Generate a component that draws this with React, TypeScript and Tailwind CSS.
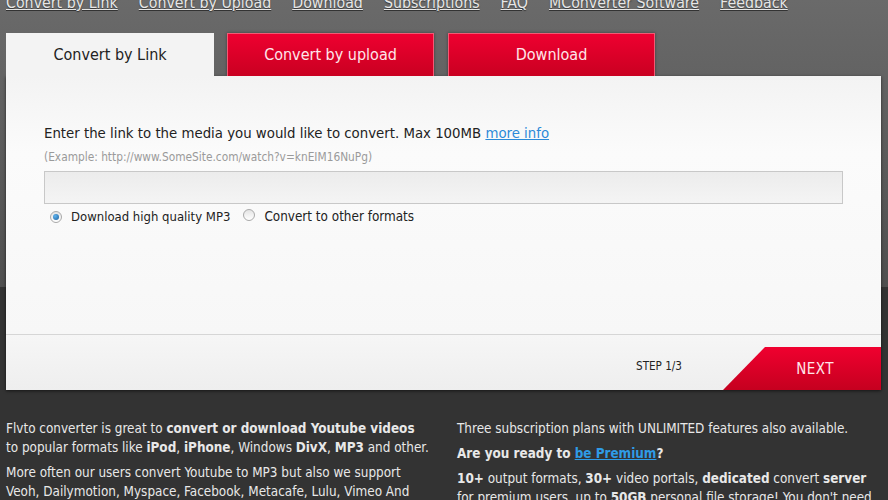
import React from "react";

const navLinks = [
  "Convert by Link",
  "Convert by Upload",
  "Download",
  "Subscriptions",
  "FAQ",
  "MConverter Software",
  "Feedback",
];

function Radio({ checked }: { checked?: boolean }) {
  return (
    <span className="inline-flex items-center justify-center w-[12px] h-[12px] rounded-full border border-[#a9a9a9] bg-[linear-gradient(to_bottom,#e4e4e4,#ffffff)]">
      {checked && <span className="w-[6px] h-[6px] rounded-full bg-[radial-gradient(circle_at_35%_35%,#5fb4ef,#1c5f9c)]" />}
    </span>
  );
}

export default function App() {
  return (
    <div
      className="w-[888px] h-[500px] overflow-hidden bg-[linear-gradient(to_bottom,#6a6a6a_0px,#4f4f4f_287px,#333333_287px,#333333_100%)]"
      style={{ fontFamily: "Tahoma, 'DejaVu Sans Condensed', 'DejaVu Sans', sans-serif" }}
    >
      {/* Top links */}
      <nav className="flex gap-[21px] pl-[6px] h-[33px] -mt-[6px] text-[15.8px] leading-[18px] text-[#e6e6e6]">
        {navLinks.map((l) => (
          <a key={l} href="#" className="underline [text-shadow:0_1px_1px_#333]">
            {l}
          </a>
        ))}
      </nav>
      <div className="h-[6px]" />

      {/* Tabs */}
      <div className="flex pl-[6px] h-[43px]">
        <div className="w-[208px] flex items-center justify-center bg-[#f3f3f3] text-[16px] text-[#222]">
          Convert by Link
        </div>
        <div className="ml-[13px] w-[207px] flex items-center justify-center border border-[#f25a74] border-b-0 bg-[linear-gradient(to_bottom,#ee0030,#c90021)] text-[16px] text-[#ffe6ea] shadow-[0_0_3px_rgba(0,0,0,0.4)]">
          Convert by upload
        </div>
        <div className="ml-[14px] w-[207px] flex items-center justify-center border border-[#f25a74] border-b-0 bg-[linear-gradient(to_bottom,#ee0030,#c90021)] text-[16px] text-[#ffe6ea] shadow-[0_0_3px_rgba(0,0,0,0.4)]">
          Download
        </div>
      </div>

      {/* Panel */}
      <div className="ml-[6px] w-[875px] h-[314px] flex flex-col bg-[#f9f9f9] shadow-[0_1px_3px_rgba(0,0,0,0.6)]">
        <div className="h-[259px] px-[38px] pt-[48px] bg-[linear-gradient(to_bottom,#f3f3f3,#fbfbfb_30%,#f7f7f7)] border-b border-[#d6d6d6]">
          <p className="text-[14.8px] leading-[18px] text-[#222]">
            Enter the link to the media you would like to convert. Max 100MB{" "}
            <a href="#" className="underline text-[#2b8ad8]">more info</a>
          </p>
          <p className="mt-[8px] text-[11.8px] leading-[14px] text-[#9a9a9a]">
            (Example: http://www.SomeSite.com/watch?v=knEIM16NuPg)
          </p>
          <div className="mt-[7px] w-[799px] h-[33px] border border-[#c8c8c8] bg-[linear-gradient(to_bottom,#ececec,#f4f4f4)]" />
          <div className="mt-[5px] flex items-center pl-[6px] text-[13px] leading-[16px] text-[#222]">
            <Radio checked />
            <span className="ml-[9px]">Download high quality MP3</span>
            <span className="ml-[13px]"><Radio /></span>
            <span className="ml-[9px] text-[13.4px]">Convert to other formats</span>
          </div>
        </div>
        <div className="flex-1 flex items-end bg-[linear-gradient(to_bottom,#f6f6f6,#eeeeee)]">
          <div className="flex-1 self-center text-right pr-[41px] pt-[8px] text-[11.6px] text-[#222]">STEP 1/3</div>
          <div className="w-[158px] h-[43px] flex items-center justify-end pr-[47px] pt-[2px] [clip-path:polygon(42px_0,100%_0,100%_100%,0_100%)] bg-[linear-gradient(to_bottom,#f0002f,#c5001f)] text-[15px] text-[#ffe6ea] tracking-[0.5px]">
            NEXT
          </div>
        </div>
      </div>

      {/* Footer text */}
      <div className="flex pt-[29px] text-[13.4px] leading-[19px] text-[#e8e8e8]">
        <div className="w-[457px] pl-[6px]">
          <p>
            Flvto converter is great to <b>convert or download Youtube videos</b>
            <br />
            to popular formats like <b>iPod</b>, <b>iPhone</b>, Windows <b>DivX</b>, <b>MP3</b> and other.
          </p>
          <p className="mt-[6px]">
            More often our users convert Youtube to MP3 but also we support
            <br />
            Veoh, Dailymotion, Myspace, Facebook, Metacafe, Lulu, Vimeo And
          </p>
        </div>
        <div className="w-[431px]">
          <p>Three subscription plans with UNLIMITED features also available.</p>
          <p className="mt-[6px] font-bold">
            Are you ready to <a href="#" className="underline text-[#2f9be6]">be Premium</a>?
          </p>
          <p className="mt-[6px]">
            <b>10+</b> output formats, <b>30+</b> video portals, <b>dedicated</b> convert <b>server</b>
            <br />
            for premium users, up to <b>50GB</b> personal file storage! You don't need
          </p>
        </div>
      </div>
    </div>
  );
}
